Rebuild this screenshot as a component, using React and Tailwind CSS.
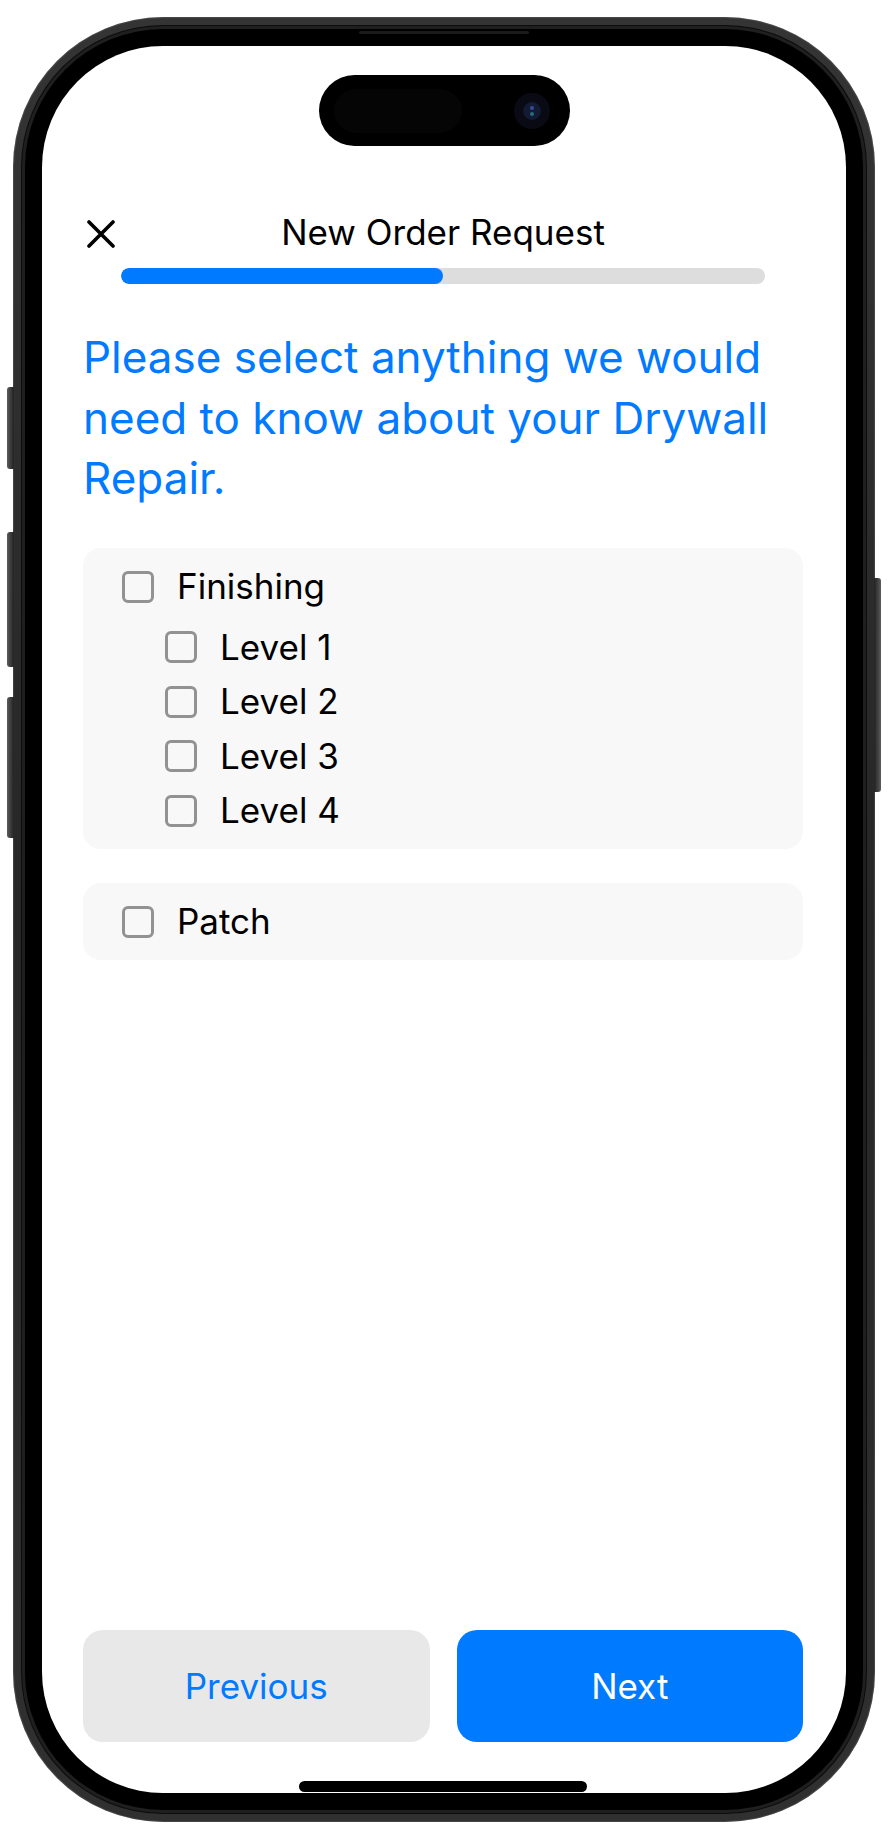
import React from "react";

const levels = ["Level 1", "Level 2", "Level 3", "Level 4"];

const Checkbox = () => (
  <span className="block w-[32px] h-[32px] shrink-0 rounded-[6px] border-[3px] border-[#929292]" />
);

const CheckRow = ({ label, nested }) => (
  <div className={`flex items-center h-[46px] ${nested ? "pl-[82px]" : "pl-[39px]"}`}>
    <Checkbox />
    <span className="ml-[23px] text-[35px] leading-none text-black">{label}</span>
  </div>
);

const CloseIcon = () => (
  <svg width="28" height="28" viewBox="0 0 28 28" fill="none">
    <path d="M2 2 L26 26 M26 2 L2 26" stroke="#000" strokeWidth="3.6" strokeLinecap="round" />
  </svg>
);

export default function App() {
  return (
    <div className="w-[896px] h-[1834px] bg-white pl-[13px] pt-[17px] font-[Inter,sans-serif]">
      {/* phone body */}
      <div className="relative w-[862px] h-[1805px] rounded-[150px] bg-gradient-to-b from-[#343434] via-[#262626] to-[#303030] p-[8px] shadow-[inset_0_0_1px_1px_rgba(120,120,120,0.35)]">
        {/* side buttons */}
        <div className="absolute left-[-6px] top-[370px] w-[7px] h-[82px] rounded-l-[3px] bg-gradient-to-r from-[#5c5c5c] to-[#222]" />
        <div className="absolute left-[-6px] top-[515px] w-[7px] h-[135px] rounded-l-[3px] bg-gradient-to-r from-[#5c5c5c] to-[#222]" />
        <div className="absolute left-[-6px] top-[680px] w-[7px] h-[141px] rounded-l-[3px] bg-gradient-to-r from-[#5c5c5c] to-[#222]" />
        <div className="absolute right-[-6px] top-[561px] w-[7px] h-[214px] rounded-r-[3px] bg-gradient-to-l from-[#5c5c5c] to-[#222]" />
        {/* speaker slot */}
        <div className="absolute left-[346px] top-[14px] w-[170px] h-[3px] rounded-full bg-[#1a1a1a]" />

        <div className="w-full h-full rounded-[142px] bg-[#0c0c0c] p-[1px]">
          <div className="w-full h-full rounded-[141px] bg-[#1f1f1f] p-[3px]">
            <div className="w-full h-full rounded-[138px] bg-black p-[17px]">
              {/* screen */}
              <div className="w-full h-full rounded-[121px] bg-white overflow-hidden flex flex-col pl-[41px] pr-[43px]">
                {/* dynamic island */}
                <div className="mt-[29px] ml-[236px] w-[251px] h-[71px] shrink-0 rounded-full bg-black flex items-center pl-[15px] pr-[20px]">
                  <div className="w-[128px] h-[44px] rounded-full bg-[#050505]" />
                  <div className="ml-auto w-[36px] h-[36px] rounded-full bg-[#0a0a14] flex items-center justify-center">
                    <div className="w-[18px] h-[18px] rounded-full bg-[#121a34] flex flex-col items-center justify-center gap-[2px]">
                      <span className="block w-[4px] h-[4px] rounded-full bg-[#3a4a9a]" />
                      <span className="block w-[4px] h-[4px] rounded-full bg-[#2a6a7a]" />
                    </div>
                  </div>
                </div>

                {/* header */}
                <div className="mt-[66px] h-[44px] shrink-0 grid grid-cols-[1fr_auto_1fr] items-center">
                  <div className="pl-[4px] flex items-center">
                    <CloseIcon />
                  </div>
                  <h1 className="pb-[4px] text-[35px] leading-none text-black font-normal">New Order Request</h1>
                  <div />
                </div>

                {/* progress */}
                <div className="mt-[12px] mx-[38px] h-[16px] shrink-0 rounded-full bg-[#dddddd] overflow-hidden">
                  <div className="w-1/2 h-full rounded-full bg-[#007aff]" />
                </div>

                {/* question */}
                <h2 className="mt-[43px] text-[44px] leading-[60.5px] text-[#007aff] font-normal">
                  Please select anything we would
                  <br />
                  need to know about your Drywall
                  <br />
                  Repair.
                </h2>

                {/* options */}
                <div className="mt-[39.5px] rounded-[18px] bg-[#f8f8f8] pt-[15.5px] pb-[15.5px]">
                  <CheckRow label="Finishing" />
                  <div className="mt-[14.5px] flex flex-col gap-[8.5px]">
                    {levels.map((level) => (
                      <CheckRow key={level} label={level} nested />
                    ))}
                  </div>
                </div>

                <div className="mt-[34px] rounded-[18px] bg-[#f8f8f8] py-[15.5px]">
                  <CheckRow label="Patch" />
                </div>

                <div className="flex-1" />

                {/* footer buttons */}
                <div className="grid grid-cols-2 gap-[27px] h-[112px] shrink-0">
                  <button className="rounded-[20px] bg-[#e8e8e8] text-[35px] text-[#007aff]">Previous</button>
                  <button className="rounded-[20px] bg-[#007aff] text-[35px] text-white">Next</button>
                </div>

                <div className="mt-[39px] mb-[1px] mx-auto w-[288px] h-[11px] shrink-0 rounded-full bg-black" />
              </div>
            </div>
          </div>
        </div>
      </div>
    </div>
  );
}
